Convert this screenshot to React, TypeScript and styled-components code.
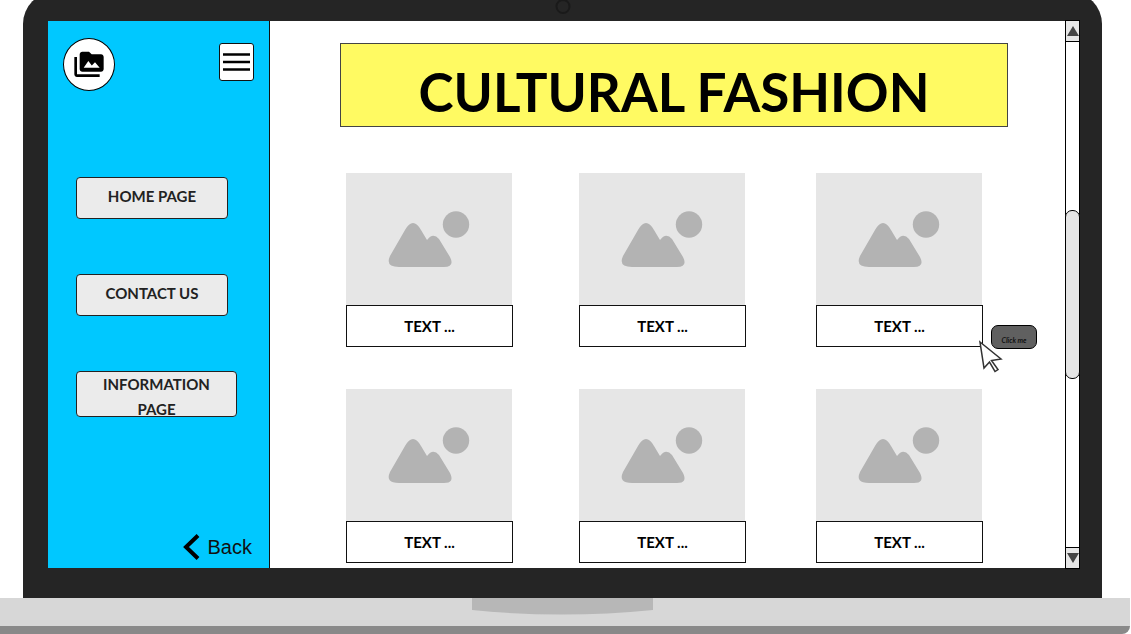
import React from "react";
import styled, { createGlobalStyle } from "styled-components";

const GlobalStyle = createGlobalStyle`
  *, *::before, *::after { box-sizing: border-box; }
  body { margin: 0; background: #fff; overflow-x: hidden; }
  #root { overflow: hidden; }
  button { margin: 0; padding: 0; font: inherit; color: inherit; cursor: pointer; }
`;

const display = `Lato, "Open Sans", sans-serif`;

const Lid = styled.div`
  margin: -8px 29px 0 23px;
  padding: 29px 22px 30px 25px;
  background: #252525;
  border-radius: 32px 32px 0 0;
  position: relative;
`;

const Camera = styled.span`
  position: absolute;
  top: 7px;
  left: 50%;
  width: 15px;
  height: 15px;
  transform: translateX(-50%);
  border: 2px solid #1a1a1a;
  border-radius: 50%;
`;

const Screen = styled.div`
  display: flex;
  min-height: 547px;
  background: #fff;
`;

const Sidebar = styled.aside`
  display: flex;
  flex-direction: column;
  flex: 0 0 222px;
  padding: 17px 15px 7px;
  background: #00c8ff;
  border-right: 1px solid #111;
`;

const SidebarTop = styled.div`
  display: flex;
  justify-content: space-between;
  align-items: flex-start;
`;

const Logo = styled.a`
  display: grid;
  place-items: center;
  width: 52px;
  height: 53px;
  color: #000;
  background: #fff;
  border: 1px solid #000;
  border-radius: 50%;
`;

const MenuButton = styled.button`
  display: grid;
  place-items: center;
  width: 35px;
  height: 38px;
  margin-top: 5px;
  background: #fff;
  border: 1px solid #111;
  border-radius: 3px;
`;

const Nav = styled.nav`
  display: flex;
  flex-direction: column;
  align-items: flex-start;
  gap: 55px;
  padding: 86px 0 0 13px;
`;

const NavButton = styled.button<{ $large?: boolean }>`
  width: ${(p) => (p.$large ? 161 : 152)}px;
  height: ${(p) => (p.$large ? 46 : 42)}px;
  background: #ebebeb;
  border: 1px solid #222;
  border-radius: 4px;
  && {
    color: #222;
    font: 700 15px/25px ${display};
    padding: ${(p) => (p.$large ? "0 18px 2px" : "0 0 4px")};
  }
`;

const BackLink = styled.a`
  display: flex;
  align-items: center;
  align-self: flex-end;
  gap: 8px;
  margin-top: auto;
  padding-right: 2px;
  color: #111;
  font: 20px/28px "Liberation Sans", Arial, sans-serif;
  text-decoration: none;
`;

const Content = styled.main`
  flex: 1;
  min-width: 0;
  padding: 22px 57px 5px 70px;
`;

const Title = styled.h1`
  margin: 0;
  padding: 14px 0 0;
  height: 84px;
  background: #fffa62;
  border: 1px solid #444;
  color: #000;
  font: 700 53px/68px ${display};
  text-align: center;
  white-space: nowrap;
`;

const Gallery = styled.div`
  display: grid;
  grid-template-columns: 233fr 237fr 167fr;
  row-gap: 42px;
  padding: 46px 25px 0 6px;
`;

const Card = styled.figure`
  position: relative;
  width: 167px;
  margin: 0;
`;

const Picture = styled.svg`
  display: block;
  width: 166px;
  height: 132px;
  background: #e6e6e6;
`;

const Caption = styled.figcaption`
  height: 42px;
  border: 1px solid #111;
  background: #fff;
  color: #000;
  font: 700 15px/40px ${display};
  text-align: center;
`;

const Hint = styled.button`
  position: absolute;
  left: 175px;
  top: 152px;
  width: 46px;
  height: 24px;
  background: #606060;
  border: 1px solid #000;
  border-radius: 7px;
  && {
    padding-top: 5px;
    color: #111;
    font: italic 700 7px/16px ${display};
  }
`;

const Pointer = styled.svg`
  position: absolute;
  left: 163px;
  top: 167px;
`;

const Scrollbar = styled.div`
  display: flex;
  flex-direction: column;
  flex: 0 0 15px;
  margin: -1px 0;
  border: 1px solid #000;
  background: #fff;
`;

const ScrollButton = styled.button<{ $down?: boolean }>`
  display: grid;
  place-items: center;
  height: 21px;
  background: #e6e6e6;
  border: 0 solid #000;
  border-width: ${(p) => (p.$down ? "1px 0 0" : "0 0 1px")};
`;

const Track = styled.div`
  display: flex;
  flex-direction: column;
  flex: 1;
  &::before, &::after { content: ""; flex: 1; }
`;

const Thumb = styled.div`
  flex: 1;
  margin: 0 -1px;
  background: #e6e6e6;
  border: 1px solid #000;
  border-radius: 7px;
`;

const Base = styled.div`
  margin-right: 1px;
  padding-right: 5px;
  height: 36px;
  background: #d7d7d7;
  border-bottom: 8px solid #898989;
  border-bottom-right-radius: 8px;
`;

const Notch = styled.svg`
  display: block;
  margin: 0 auto;
`;

const cards = ["a1", "a2", "a3", "b1", "b2", "b3"];

function Placeholder() {
  return (
    <Picture viewBox="0 0 166 132" role="img" aria-label="Image placeholder">
      <path
        fill="#b3b3b3"
        d="M44 83 L59 57 Q67 43 75 57 L81 67 Q87 59 93 66 L104 84 Q109 94 98 94 H53 Q39 94 44 83Z"
      />
      <circle cx="110" cy="51.500" r="13.200" fill="#b3b3b3" />
    </Picture>
  );
}

export default function App() {
  return (
    <>
      <GlobalStyle />
      <Lid>
        <Camera />
        <Screen>
          <Sidebar>
            <SidebarTop>
              <Logo href="#" aria-label="Gallery">
                <svg width="32" height="32" viewBox="0 0 24 24" fill="currentColor">
                  <path d="M3 6H1v13c0 1.100.9 2 2 2h17v-2H3V6zm18-2h-7l-2-2H7c-1.100 0-1.990.9-1.990 2L5 15c0 1.100.9 2 2 2h14c1.100 0 2-.9 2-2V6c0-1.100-.9-2-2-2zM8 14l3.500-5 2.600 3.300L16.500 10 20 14H8z" />
                </svg>
              </Logo>
              <MenuButton aria-label="Menu">
                <svg width="27" height="18" viewBox="0 0 27 18" fill="none" stroke="#000" strokeWidth="2.500">
                  <path d="M0 1.500H27M0 9H27M0 16.500H27" />
                </svg>
              </MenuButton>
            </SidebarTop>
            <Nav>
              <NavButton>HOME PAGE</NavButton>
              <NavButton>CONTACT US</NavButton>
              <NavButton $large>INFORMATION PAGE</NavButton>
            </Nav>
            <BackLink href="#">
              <svg width="17" height="26" viewBox="0 0 17 26" fill="none" stroke="#000" strokeWidth="4">
                <path d="M15 1.500L3 13L15 24.500" />
              </svg>
              Back
            </BackLink>
          </Sidebar>
          <Content>
            <Title>CULTURAL FASHION</Title>
            <Gallery>
              {cards.map((id) => (
                <Card key={id}>
                  <Placeholder />
                  <Caption>TEXT ...</Caption>
                  {id === "a3" && (
                    <>
                      <Hint>Click me</Hint>
                      <Pointer width="24" height="34" viewBox="0 0 24 34" fill="#fff" stroke="#333" strokeWidth="1.500">
                        <path d="M1 2L22 19L12.500 20.500L19 29.500L16 31.500L10.500 22L5 28Z" />
                      </Pointer>
                    </>
                  )}
                </Card>
              ))}
            </Gallery>
          </Content>
          <Scrollbar>
            <ScrollButton aria-label="Scroll up">
              <svg width="12" height="10" viewBox="0 0 12 10" fill="#444">
                <path d="M6 0L12 10H0Z" />
              </svg>
            </ScrollButton>
            <Track>
              <Thumb />
            </Track>
            <ScrollButton $down aria-label="Scroll down">
              <svg width="12" height="10" viewBox="0 0 12 10" fill="#444">
                <path d="M0 0H12L6 10Z" />
              </svg>
            </ScrollButton>
          </Scrollbar>
        </Screen>
      </Lid>
      <Base>
        <Notch width="181" height="17" viewBox="0 0 181 17">
          <path fill="#b7b7b7" d="M0 0H181V12Q90 21 0 12Z" />
        </Notch>
      </Base>
    </>
  );
}
